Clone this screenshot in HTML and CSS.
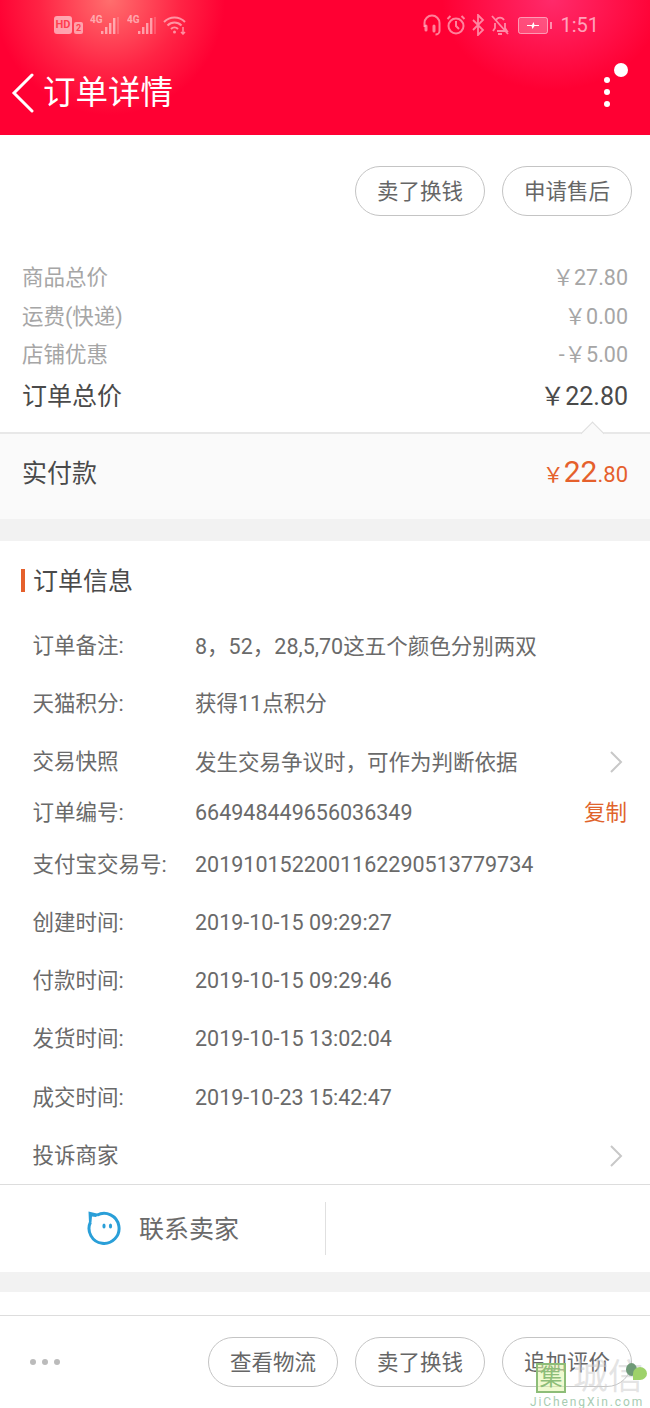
FILE: index.html
```html
<!DOCTYPE html>
<html lang="zh-CN">
  <head>
    <meta charset="UTF-8" />
    <title>订单详情</title>
    <link rel="stylesheet" href="styles.css">
  </head>
  <body>
    <div class="header">
      <div class="status-bar">
        <div class="status-left">
          <span class="hd">HD</span><span class="hd-num">2</span>
          <svg class="signal" width="30" height="22" viewBox="0 0 30 22"><text x="0" y="9" class="net">4G</text><path d="M11 20h2.400v-3H11zM15 20h2.400v-7H15zM19 20h2.400V9H19zM23 20h2.400V4H23z" fill="currentColor"/><path d="M28 3v17" stroke="currentColor" stroke-width=".7"/></svg>
          <svg class="signal" width="30" height="22" viewBox="0 0 30 22"><text x="0" y="9" class="net">4G</text><path d="M11 20h2.400v-3H11zM15 20h2.400v-7H15zM19 20h2.400V9H19zM23 20h2.400V4H23z" fill="currentColor"/><path d="M28 3v17" stroke="currentColor" stroke-width=".7"/></svg>
          <svg class="wifi" width="24" height="20" viewBox="0 0 24 20" fill="none" stroke="currentColor" stroke-width="2"><path d="M1 7c6-6 15-6 21 0"/><path d="M4.500 10.500c4-4 10-4 14 0"/><path d="M8 14c2-2 5-2 7 0"/><circle cx="11.500" cy="17" r="1.500" fill="currentColor" stroke="none"/><path d="M20 12v7M18 17l2 2 2-2" stroke-width="1.500"/></svg>
        </div>
        <div class="status-right">
          <svg class="ic-head" width="18" height="22" viewBox="0 0 18 22" fill="none" stroke="currentColor" stroke-width="2"><path d="M1.500 13V9a7.500 7.500 0 0 1 15 0v8c0 2-2 3.500-4 3.500"/><path d="M3 12v4M11 12v5" stroke-width="3" stroke-linecap="round"/></svg>
          <svg class="ic-alarm" width="20" height="22" viewBox="0 0 20 22" fill="none" stroke="currentColor" stroke-width="2"><circle cx="10" cy="12" r="7.500"/><path d="M10 7v5l3 3M1.500 5l3-3M18.500 5l-3-3"/></svg>
          <svg class="ic-bt" width="14" height="22" viewBox="0 0 14 22" fill="none" stroke="currentColor" stroke-width="1.800"><path d="M2 6l10 10-5 5V1l5 5L2 16"/></svg>
          <svg class="ic-bell" width="18" height="22" viewBox="0 0 18 22" fill="none" stroke="currentColor" stroke-width="1.800"><path d="M5 6a4.500 4.500 0 0 1 8 0M14 9v5l2 3H6M2 17l2-3V9M7 20h4M1 2l16 18"/></svg>
          <svg class="battery" width="34" height="17" viewBox="0 0 34 17"><rect x=".5" y=".5" width="29" height="16" rx="2" fill="rgba(255,255,255,.22)" stroke="currentColor"/><path d="M32 5h2v7h-2z" fill="currentColor"/><path d="M9 8h5l1.500-3 1 3H21v1h-4.500l-2 3-1-3H9z" fill="#fff"/></svg>
          <span class="clock">1:51</span>
        </div>
      </div>
      <div class="nav">
        <svg class="back" width="24" height="40" viewBox="0 0 24 40" fill="none" stroke="currentColor" stroke-width="3" stroke-linecap="round"><path d="M21 2L3 20l18 18"/></svg>
        <span class="nav-title">订单详情</span>
        <div class="more">
          <i></i><i></i><i></i>
          <b class="more-badge"></b>
        </div>
      </div>
    </div>

    <div class="actions top-actions">
      <span class="pill">卖了换钱</span>
      <span class="pill">申请售后</span>
    </div>

    <div class="prices">
      <div class="price-row"><span>商品总价</span><span>￥27.80</span></div>
      <div class="price-row"><span>运费(快递)</span><span>￥0.00</span></div>
      <div class="price-row"><span>店铺优惠</span><span>-￥5.00</span></div>
      <div class="price-row total"><span>订单总价</span><span>￥22.80</span></div>
    </div>

    <div class="paid">
      <span class="notch"></span>
      <span class="paid-label">实付款</span>
      <span class="paid-amount"><small>￥</small><strong>22</strong><small class="cents">.80</small></span>
    </div>

    <div class="gap"></div>

    <div class="info">
      <h2 class="info-title">订单信息</h2>
      <div class="info-row"><span class="label">订单备注:</span><span class="value">8<span class="comma">，</span>52<span class="comma">，</span>28,5,70这五个颜色分别两双</span></div>
      <div class="info-row"><span class="label">天猫积分:</span><span class="value">获得11点积分</span></div>
      <div class="info-row">
        <span class="label">交易快照</span><span class="value">发生交易争议时<span class="comma">，</span>可作为判断依据</span>
        <svg class="chevron" width="14" height="22" viewBox="0 0 14 22" fill="none" stroke="currentColor" stroke-width="2"><path d="M2 1l10 10L2 21"/></svg>
      </div>
      <div class="info-row short"><span class="label">订单编号:</span><span class="value">664948449656036349</span><span class="copy">复制</span></div>
      <div class="info-row"><span class="label">支付宝交易号:</span><span class="value">2019101522001162290513779734</span></div>
      <div class="info-row"><span class="label">创建时间:</span><span class="value">2019-10-15 09:29:27</span></div>
      <div class="info-row"><span class="label">付款时间:</span><span class="value">2019-10-15 09:29:46</span></div>
      <div class="info-row"><span class="label">发货时间:</span><span class="value">2019-10-15 13:02:04</span></div>
      <div class="info-row"><span class="label">成交时间:</span><span class="value">2019-10-23 15:42:47</span></div>
      <div class="info-row">
        <span class="label">投诉商家</span><span class="value"></span>
        <svg class="chevron" width="14" height="22" viewBox="0 0 14 22" fill="none" stroke="currentColor" stroke-width="2"><path d="M2 1l10 10L2 21"/></svg>
      </div>
    </div>

    <div class="contact">
      <div class="contact-seller">
        <svg width="36" height="36" viewBox="0 0 36 36" fill="none"><path d="M11 4.200A15 15 0 1 1 4.500 11" stroke="#2a9fd8" stroke-width="3"/><path d="M2.500.5L13 3l-3 3-4-.5-.5 5.500-2.500 1z" fill="#2a9fd8"/><ellipse cx="18" cy="15" rx="1.600" ry="2.500" fill="#2a9fd8"/><ellipse cx="24.500" cy="15" rx="1.600" ry="2.500" fill="#2a9fd8"/></svg>
        <span class="contact-text">联系卖家</span>
      </div>
      <div class="contact-other"></div>
    </div>

    <div class="gap thin"></div>
    <div class="spacer"></div>

    <div class="bottom-bar">
      <div class="dots"><i></i><i></i><i></i></div>
      <div class="actions">
        <span class="pill">查看物流</span>
        <span class="pill">卖了换钱</span>
        <span class="pill">追加评价</span>
      </div>
    </div>

    <div class="watermark">
      <div class="wm-main">
        <span class="wm-seal">集</span><span class="wm-name">城信</span>
        <span class="wm-leaf"></span>
        <span class="wm-leaf second"></span>
      </div>
      <div class="wm-url">JiChengXin.com</div>
    </div>
  </body>
</html>
```

FILE: styles.css
```css
html,
body {
  margin: 0;
  padding: 0;
  background-color: #fff;
  font-family: Roboto, 'Noto Sans CJK SC', sans-serif;
  color: #666;
}

body {
  position: relative;
  width: 650px;
  height: 1408px;
  overflow: hidden;
}

.header {
  height: 135px;
  color: #fff;
  background-color: #ff0033;
  background-image:
    radial-gradient(circle at 110px 0, rgba(255, 130, 120, 0.85) 0, rgba(255, 80, 90, 0.45) 70px, rgba(255, 0, 51, 0) 115px),
    radial-gradient(ellipse 110px 90px at 552px 0, rgba(255, 60, 130, 0.7) 0, rgba(255, 0, 51, 0) 100%);
}

.status-bar {
  height: 50px;
  display: flex;
  justify-content: space-between;
  align-items: center;
  padding: 0 51px 0 54px;
  color: rgba(255, 255, 255, 0.5);
}

.status-left,
.status-right {
  display: flex;
  align-items: center;
}

.status-left svg {
  margin-left: 7px;
}

.status-left .wifi {
  margin-left: 6px;
}

.hd {
  width: 18px;
  height: 18px;
  border-radius: 3px;
  background-color: rgba(255, 255, 255, 0.55);
  color: #ff4050;
  font-size: 11px;
  font-weight: 700;
  line-height: 18px;
  text-align: center;
}

.hd-num {
  margin-left: 2px;
  width: 9px;
  height: 12px;
  margin-top: 6px;
  border-radius: 2px;
  background-color: rgba(255, 255, 255, 0.5);
  color: #ff4050;
  font-size: 9px;
  font-weight: 700;
  line-height: 12px;
  text-align: center;
}

.net {
  font-family: Roboto, sans-serif;
  font-size: 10px;
  font-weight: 700;
  fill: currentColor;
}

.ic-head { margin-right: 5px; }
.ic-alarm { margin-right: 5px; }
.ic-bt { margin-right: 6px; }
.ic-bell { margin-right: 9px; }
.battery { margin-right: 8px; }

.clock {
  font-size: 20px;
  color: rgba(255, 255, 255, 0.6);
}

.nav {
  position: relative;
  height: 85px;
  display: flex;
  align-items: center;
  padding: 0 0 0 11px;
}

.nav-title {
  margin-left: 8px;
  font-size: 32.500px;
  line-height: 40px;
}

.more i {
  position: absolute;
  left: 604px;
  width: 6px;
  height: 6px;
  border-radius: 50%;
  background-color: #fff;
}

.more i:nth-child(1) { top: 27px; }
.more i:nth-child(2) { top: 39px; }
.more i:nth-child(3) { top: 51px; }

.more-badge {
  position: absolute;
  left: 614px;
  top: 13px;
  width: 14px;
  height: 14px;
  border-radius: 50%;
  background-color: #fff;
}

.actions {
  display: flex;
  justify-content: flex-end;
  gap: 17px;
}

.top-actions {
  padding: 31px 18px 0 0;
}

.pill {
  box-sizing: border-box;
  width: 130px;
  height: 50px;
  border: 1px solid #c4c4c4;
  border-radius: 25px;
  font-size: 21.500px;
  line-height: 49px;
  text-align: center;
  color: #666;
}

.prices {
  padding: 43px 22px 0;
  height: 216px;
  box-sizing: border-box;
}

.price-row {
  display: flex;
  justify-content: space-between;
  height: 38.500px;
  line-height: 38px;
  font-size: 21.500px;
  color: #a6a6a6;
}

.price-row.total {
  font-size: 25px;
  color: #4a4a4a;
  height: 44px;
  line-height: 44px;
}

.paid {
  position: relative;
  box-sizing: border-box;
  height: 87px;
  padding: 0 22px 11px;
  display: flex;
  justify-content: space-between;
  align-items: center;
  border-top: 2px solid #e8e8e8;
  background-color: #fafafa;
}

.notch {
  position: absolute;
  left: 584px;
  top: -9px;
  width: 16px;
  height: 16px;
  border-top: 1px solid #ddd;
  border-left: 1px solid #ddd;
  background-color: #fafafa;
  transform: rotate(45deg);
}

.paid-label {
  font-size: 25px;
  color: #4a4a4a;
}

.paid-amount {
  color: #e5602c;
  display: flex;
  align-items: baseline;
}

.paid-amount small {
  font-size: 21px;
}

.paid-amount strong {
  font-size: 30px;
  font-weight: 400;
}

.paid-amount .cents {
  font-size: 22px;
}

.gap {
  height: 22px;
  background-color: #f2f2f2;
}

.gap.thin {
  height: 20px;
}

.spacer {
  height: 23px;
}

.info {
  box-sizing: border-box;
  height: 644px;
  padding-top: 28px;
  border-bottom: 1px solid #ddd;
}

.info-title {
  margin: 0 0 24.500px 21px;
  padding-left: 8px;
  border-left: 4px solid #e5602c;
  height: 23px;
  line-height: 25px;
  font-size: 25px;
  font-weight: 400;
  color: #4a4a4a;
}

.info-row {
  display: flex;
  align-items: center;
  height: 58.300px;
  padding: 0 23px 0 32.500px;
  font-size: 21.500px;
  line-height: 30px;
  color: #6a6a6a;
}

.info-row.short {
  height: 44px;
}

.label {
  width: 162.500px;
  flex: none;
  white-space: nowrap;
}

.value {
  flex: 1;
  white-space: nowrap;
}

.comma {
  font-family: 'Noto Sans CJK TC', sans-serif;
}

.chevron {
  color: #c8c8c8;
  flex: none;
  margin-right: 4px;
}

.copy {
  color: #e0642c;
}

.contact {
  height: 87px;
  display: flex;
  align-items: center;
}

.contact-seller {
  box-sizing: border-box;
  width: 326px;
  height: 53px;
  display: flex;
  align-items: center;
  justify-content: center;
  gap: 17px;
  border-right: 1px solid #e0e0e0;
  font-size: 25px;
  color: #6a6a6a;
}

.contact-text {
  margin-top: -4px;
}

.bottom-bar {
  height: 92px;
  border-top: 1px solid #ddd;
  display: flex;
  align-items: center;
  justify-content: space-between;
  padding: 0 18px 0 30px;
}

.dots {
  display: flex;
  gap: 6px;
}

.dots i {
  width: 6px;
  height: 6px;
  border-radius: 50%;
  background-color: #bbb;
}

.watermark {
  position: absolute;
  left: 530px;
  top: 1360px;
  width: 120px;
}

.wm-main {
  display: flex;
  align-items: center;
  height: 35px;
  position: relative;
}

.wm-seal {
  box-sizing: border-box;
  margin-left: 6px;
  width: 30px;
  height: 30px;
  border: 2px solid #8dbd78;
  background-color: rgba(226, 245, 170, 0.55);
  color: #8dbd78;
  font-size: 23px;
  line-height: 25px;
  text-align: center;
}

.wm-name {
  margin-left: 7px;
  font-size: 35px;
  line-height: 35px;
  color: rgba(205, 205, 205, 0.55);
  white-space: nowrap;
}

.wm-leaf {
  position: absolute;
  left: 96px;
  top: 3px;
  width: 11px;
  height: 13px;
  border-radius: 50%;
  background-color: #6f9a78;
}

.wm-leaf.second {
  left: 103px;
  top: 7px;
  width: 14px;
  height: 13px;
  border-radius: 50% 50% 50% 0;
  background-color: #9ed26a;
}

.wm-url {
  font-size: 12px;
  letter-spacing: 1.900px;
  color: #a8ccb2;
  white-space: nowrap;
  line-height: 14px;
}
```
